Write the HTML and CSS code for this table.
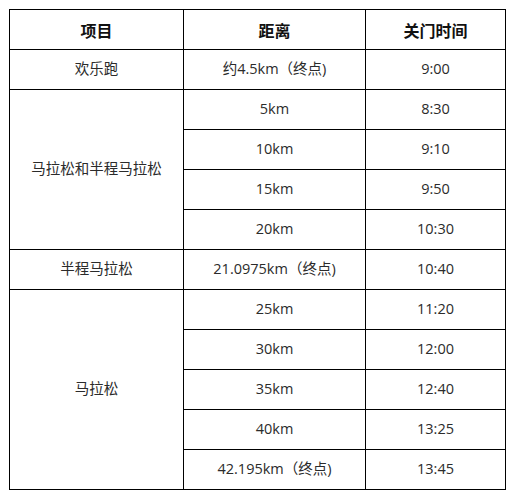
FILE: index.html
```html
<!DOCTYPE html>
<html lang="zh-CN">
<head>
<meta charset="utf-8">
<link rel="stylesheet" href="styles.css">
</head>
<body>
<table class="cutoff">
  <colgroup>
    <col class="c1"><col class="c2"><col class="c3">
  </colgroup>
  <thead>
    <tr><th>项目</th><th>距离</th><th>关门时间</th></tr>
  </thead>
  <tbody>
    <tr><td>欢乐跑</td><td>约4.5km（终点)</td><td>9:00</td></tr>
    <tr><td rowspan="4">马拉松和半程马拉松</td><td>5km</td><td>8:30</td></tr>
    <tr><td>10km</td><td>9:10</td></tr>
    <tr><td>15km</td><td>9:50</td></tr>
    <tr><td>20km</td><td>10:30</td></tr>
    <tr><td>半程马拉松</td><td>21.0975km（终点)</td><td>10:40</td></tr>
    <tr><td rowspan="5">马拉松</td><td>25km</td><td>11:20</td></tr>
    <tr><td>30km</td><td>12:00</td></tr>
    <tr><td>35km</td><td>12:40</td></tr>
    <tr><td>40km</td><td>13:25</td></tr>
    <tr><td>42.195km（终点)</td><td>13:45</td></tr>
  </tbody>
</table>
</body>
</html>
```
FILE: styles.css
```css
html, body {
  margin: 0;
  padding: 0;
  background: #fff;
}
body {
  padding: 9px 0 0 9px;
  font-family: "Open Sans", "Noto Sans CJK SC", sans-serif;
  color: #2b2b2b;
}
.cutoff {
  border-collapse: collapse;
  table-layout: fixed;
  width: 496px;
}
.c1 { width: 174px; }
.c2 { width: 182px; }
.c3 { width: 140px; }
.cutoff th,
.cutoff td {
  border: 1px solid #000;
  height: 39px;
  padding: 0;
  text-align: center;
  vertical-align: middle;
  font-size: 14.5px;
  font-weight: normal;
  line-height: 1;
}
.cutoff th {
  font-family: "Noto Sans CJK SC", sans-serif;
  font-size: 16px;
  font-weight: bold;
  color: #111;
}
```
